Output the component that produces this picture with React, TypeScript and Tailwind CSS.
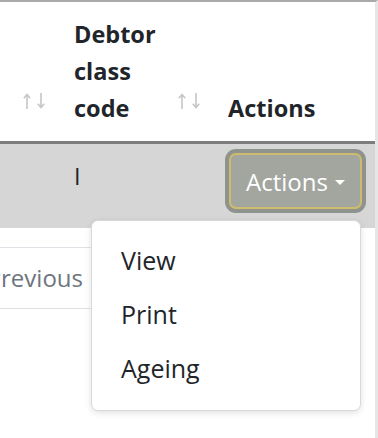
import React from 'react';

// Cropped view of a debtors table: header with sort arrows, one highlighted row
// with an open "Actions" dropdown, and the pagination peeking in underneath.

const font = { fontFamily: '"Open Sans", "Noto Sans", Arial, sans-serif' };

function SortIcon() {
  return (
    <svg width="22" height="16" viewBox="0 0 22 16" className="mb-[18px] block shrink-0" fill="none" stroke="#c6c6c6" strokeWidth="1.6">
      <path d="M4 2v14M0.8 5.2 4 1.5l3.2 3.7" />
      <path d="M18 0v14M14.8 10.8 18 14.5l3.2-3.7" />
    </svg>
  );
}

export default function App() {
  return (
    <div
      style={font}
      className="relative h-[438px] w-[378px] overflow-hidden border-t-2 border-r-[3px] border-t-[#a9a9a9] border-r-[#e6e6e6] bg-white text-[#212529]"
    >
      {/* header */}
      <div className="flex h-[142px] items-end border-b-[3px] border-[#7d7d7d] pb-[14px] text-[23.5px] font-bold leading-[37px]">
        <div className="flex w-[60px] shrink-0 items-end justify-end pr-[15px]">
          <SortIcon />
        </div>
        <div className="flex w-[154px] shrink-0 items-end justify-between pl-[14px] pr-[14px]">
          <span>
            Debtor
            <br />
            class
            <br />
            code
          </span>
          <SortIcon />
        </div>
        <div className="pl-[14px]">Actions</div>
      </div>

      {/* selected row */}
      <div className="flex h-[84px] bg-[#d6d6d6] text-[23.5px] leading-[37px]">
        <div className="w-[60px] shrink-0" />
        <div className="w-[154px] shrink-0 pl-[14px] pt-[14px]">I</div>
        <div className="flex flex-1 justify-end pr-[13px] pt-[9px]">
          <button className="flex h-[56px] w-[133px] items-center justify-center gap-[7px] rounded-[7px] border-2 border-[#cfbb6d] bg-[#a2a69f] text-[24px] text-white shadow-[0_0_0_4px_#8e938d]">
            Actions
            <span className="mt-[2px] border-x-[5px] border-t-[5px] border-x-transparent border-t-white" />
          </button>
        </div>
      </div>

      {/* pagination */}
      <div className="mt-[19px] flex">
        <div className="-ml-[26px] flex h-[62px] w-[118px] shrink-0 items-center justify-end border border-[#dee2e6] pr-[8px] text-[24px] text-[#6c757d]">
          Previous
        </div>
      </div>

      {/* open dropdown */}
      <div className="absolute left-[91px] top-[218px] w-[270px] rounded-[7px] border border-[#d9d9d9] bg-white pt-[13px] pb-[14px] text-[25px] shadow-[0_2px_6px_rgba(0,0,0,0.12)]">
        {['View', 'Print', 'Ageing'].map(item => (
          <div key={item} className="flex h-[54px] items-center pl-[29px]">
            {item}
          </div>
        ))}
      </div>
    </div>
  );
}
